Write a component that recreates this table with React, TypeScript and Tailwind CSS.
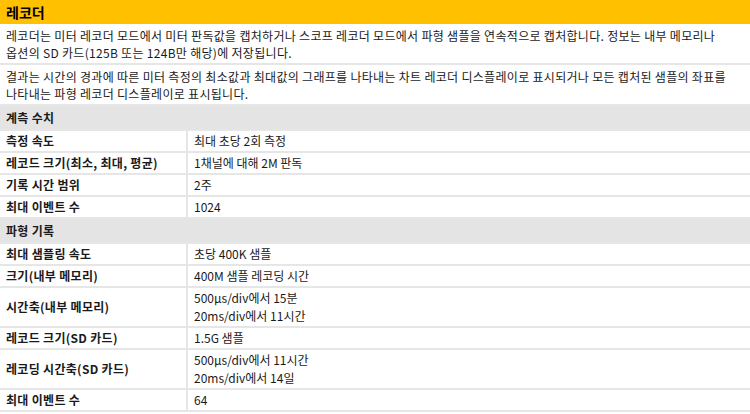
const MEASURE_ROWS = [
  { label: "측정 속도", value: ["최대 초당 2회 측정"] },
  { label: "레코드 크기(최소, 최대, 평균)", value: ["1채널에 대해 2M 판독"] },
  { label: "기록 시간 범위", value: ["2주"] },
  { label: "최대 이벤트 수", value: ["1024"] },
];

const WAVE_ROWS = [
  { label: "최대 샘플링 속도", value: ["초당 400K 샘플"] },
  { label: "크기(내부 메모리)", value: ["400M 샘플 레코딩 시간"] },
  { label: "시간축(내부 메모리)", value: ["500μs/div에서 15분", "20ms/div에서 11시간"] },
  { label: "레코드 크기(SD 카드)", value: ["1.5G 샘플"] },
  { label: "레코딩 시간축(SD 카드)", value: ["500μs/div에서 11시간", "20ms/div에서 14일"] },
  { label: "최대 이벤트 수", value: ["64"] },
];

const SectionHeader = ({ title }: { title: string }) => (
  <div className="col-span-2 flex h-[25px] items-center border-b-2 border-[#e6e6e6] bg-[#e4e4e4] px-[6px] font-bold tracking-[0.3px]">
    {title}
  </div>
);

const Row = ({ label, value }: { label: string; value: string[] }) => (
  <>
    <div className="flex items-center border-r-2 border-b-2 border-[#e6e6e6] px-[6px] py-px font-bold tracking-[0.3px]">
      {label}
    </div>
    <div className="flex flex-col justify-center border-b-2 border-[#e6e6e6] px-[6px] py-px">
      {value.map((line) => (
        <span key={line}>{line}</span>
      ))}
    </div>
  </>
);

export default function App() {
  return (
    <div
      className="h-[414px] w-[750px] overflow-hidden bg-white text-[12px] leading-[18px] text-[#1a1a1a]"
      style={{ fontFamily: '"Noto Sans CJK KR", "Noto Sans", sans-serif' }}
    >
      {/* title bar */}
      <div className="flex h-[24px] items-center bg-[#ffc000] px-[6px] text-[14px] font-bold text-black">
        레코더
      </div>

      <p className="border-b-2 border-[#e6e6e6] px-[6px] pt-[3px] pb-[2px] leading-[17px] tracking-[0.3px] break-keep">
        레코더는 미터 레코더 모드에서 미터 판독값을 캡처하거나 스코프 레코더 모드에서 파형 샘플을 연속적으로 캡처합니다. 정보는 내부 메모리나 옵션의 SD 카드(125B 또는 124B만 해당)에 저장됩니다.
      </p>
      <p className="border-b-2 border-[#e6e6e6] px-[6px] pt-[3px] pb-[2px] leading-[17px] tracking-[0.3px] break-keep">
        결과는 시간의 경과에 따른 미터 측정의 최소값과 최대값의 그래프를 나타내는 차트 레코더 디스플레이로 표시되거나 모든 캡처된 샘플의 좌표를 나타내는 파형 레코더 디스플레이로 표시됩니다.
      </p>

      <div className="grid grid-cols-[188px_1fr]">
        <SectionHeader title="계측 수치" />
        {MEASURE_ROWS.map((r) => (
          <Row key={r.label} label={r.label} value={r.value} />
        ))}
        <SectionHeader title="파형 기록" />
        {WAVE_ROWS.map((r) => (
          <Row key={r.label + r.value[0]} label={r.label} value={r.value} />
        ))}
      </div>
    </div>
  );
}
